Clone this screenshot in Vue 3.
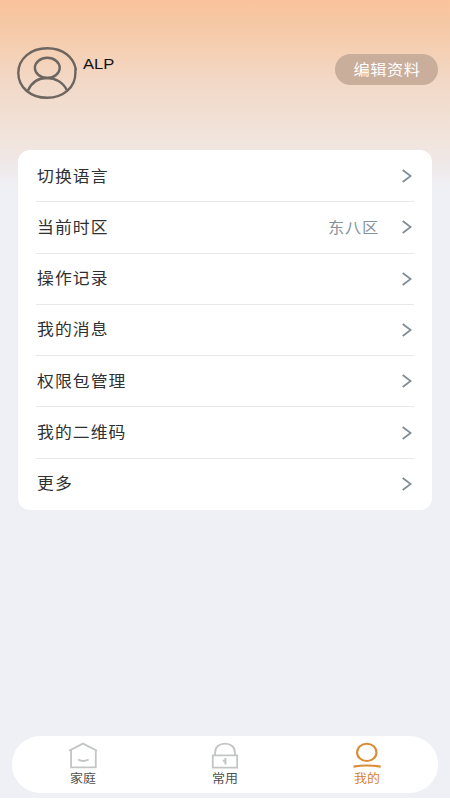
<script setup>
const rows = [
  { label: '切换语言' },
  { label: '当前时区', value: '东八区' },
  { label: '操作记录' },
  { label: '我的消息' },
  { label: '权限包管理' },
  { label: '我的二维码' },
  { label: '更多' },
]
</script>

<template>
  <main class="page">
    <header class="profile">
      <svg class="avatar" viewBox="0 0 60 52" fill="none" stroke="#6d6560" stroke-width="2.4">
        <path d="M59 23.5C57.2 9.8 45.5 1.3 30.2 1.3C13.5 1.3 1.3 11.8 1.3 26S13.5 50.8 30.2 50.8C46 50.8 58.4 40.8 58.4 26V22" />
        <ellipse cx="30.3" cy="20.9" rx="12.4" ry="10.1" />
        <path d="M11 43.5C14.5 35.5 21.5 31 30 31S46.5 35.5 50 43.5" />
      </svg>
      <span class="name">ALP</span>
      <button class="edit"><span class="wide">编辑资料</span></button>
    </header>

    <section class="card">
      <div v-for="row in rows" :key="row.label" class="row">
        <span class="label">{{ row.label }}</span>
        <span v-if="row.value" class="value">{{ row.value }}</span>
        <svg class="arrow" viewBox="0 0 10 14" fill="none" stroke="#7d8b92" stroke-width="1.7">
          <path d="M.7 1L8.7 7L.7 13" />
        </svg>
      </div>
    </section>

    <nav class="tabs">
      <a class="tab">
        <svg class="icon" viewBox="0 0 30 28" fill="none" stroke="#c3c5c5" stroke-width="1.8">
          <path d="M1 8.7L15 1.6L29 8.7M3.1 8V25.4H27.8V8" />
          <path d="M10 17.4Q15.3 20.6 20.6 17.4" />
        </svg>
        <span class="wide">家庭</span>
      </a>
      <a class="tab">
        <svg class="icon" viewBox="0 0 30 28" fill="none" stroke="#c3c5c5" stroke-width="1.8">
          <path d="M5.1 13V10.5C5.1 5 9.2 1.7 15 1.7S24.9 5 24.9 10.5V13" />
          <path d="M2.8 13.4H27.2V25.6H2.8Z" />
          <path d="M15.4 16V22.6M12.8 18.8H15.8" stroke-width="2" />
        </svg>
        <span class="wide">常用</span>
      </a>
      <a class="tab active">
        <svg class="icon" viewBox="0 0 30 28" fill="none" stroke="#dc8b38" stroke-width="2.1">
          <ellipse cx="14.8" cy="10.4" rx="9.7" ry="8.6" />
          <path d="M1.5 24.6Q14.5 22.5 28.7 24.6" />
        </svg>
        <span class="wide">我的</span>
      </a>
    </nav>
  </main>
</template>

<style>
body {
  margin: 0;
  background: #fff;
}
</style>

<style scoped>
.page {
  box-sizing: border-box;
  display: flex;
  flex-direction: column;
  height: 798px;
  margin-bottom: 2px;
  padding: 47px 12px 5px 17px;
  font-family: "Liberation Sans", "Noto Sans CJK SC", sans-serif;
  background: linear-gradient(180deg, #fac39c 0, #f5c8a4 22px, #f5cfb2 48px, #f2d8c6 80px, #f1dfd3 115px, #f1e5df 145px, #efe8e8 163px, #eff0f5 188px);
}

.profile {
  display: flex;
  height: 103px;
  align-items: flex-start;
}

.avatar {
  width: 60px;
  height: 52px;
}

.name {
  margin: 8px 0 0 6px;
  font-size: 15.5px;
  line-height: 18px;
  color: #15110f;
  transform: scaleX(1.07);
  transform-origin: left center;
}

.wide {
  display: inline-block;
  transform: scaleX(1.08);
}

.edit {
  width: 103px;
  height: 31px;
  margin: 7px 0 0 auto;
  padding: 1px 0 0 1px;
  border: 0;
  border-radius: 16px;
  background: #c9ae9c;
  color: #fff;
  font-family: inherit;
  font-size: 15px;
  line-height: 30px;
  letter-spacing: .5px;
  white-space: nowrap;
}

.card {
  box-sizing: border-box;
  height: 360px;
  margin: 0 6px 0 1px;
  padding: 1px 18px 0;
  display: grid;
  grid-template-rows: repeat(7, 1fr);
  border-radius: 12px;
  background: #fff;
}

.row {
  display: flex;
  min-height: 0;
  align-items: center;
  border-bottom: 1px solid #e7e8e9;
}

.row:last-child {
  border-bottom-color: transparent;
}

.label {
  margin-left: .5px;
  padding-top: 1px;
  font-size: 15.5px;
  line-height: 24px;
  letter-spacing: 1px;
  color: #2f3032;
  transform: scaleX(1.085);
  transform-origin: left center;
}

.value {
  margin-left: auto;
  margin-right: 23px;
  padding-top: 1px;
  font-size: 15px;
  line-height: 24px;
  letter-spacing: .7px;
  color: #849299;
  transform: scaleX(1.085);
  transform-origin: right center;
}

.arrow {
  width: 10px;
  height: 14px;
  margin-left: auto;
  margin-right: 2px;
}

.value + .arrow {
  margin-left: 0;
}

.tabs {
  display: grid;
  grid-template-columns: repeat(3, 1fr);
  height: 57px;
  margin: auto 0 0 -5px;
  border-radius: 29px;
  background: #fff;
}

.tab {
  display: flex;
  flex-direction: column;
  align-items: center;
  padding-top: 6px;
  font-size: 12px;
  line-height: 18px;
  color: #505050;
}

.icon {
  width: 30px;
  height: 28px;
}

.active {
  color: #d97f28;
}
</style>
